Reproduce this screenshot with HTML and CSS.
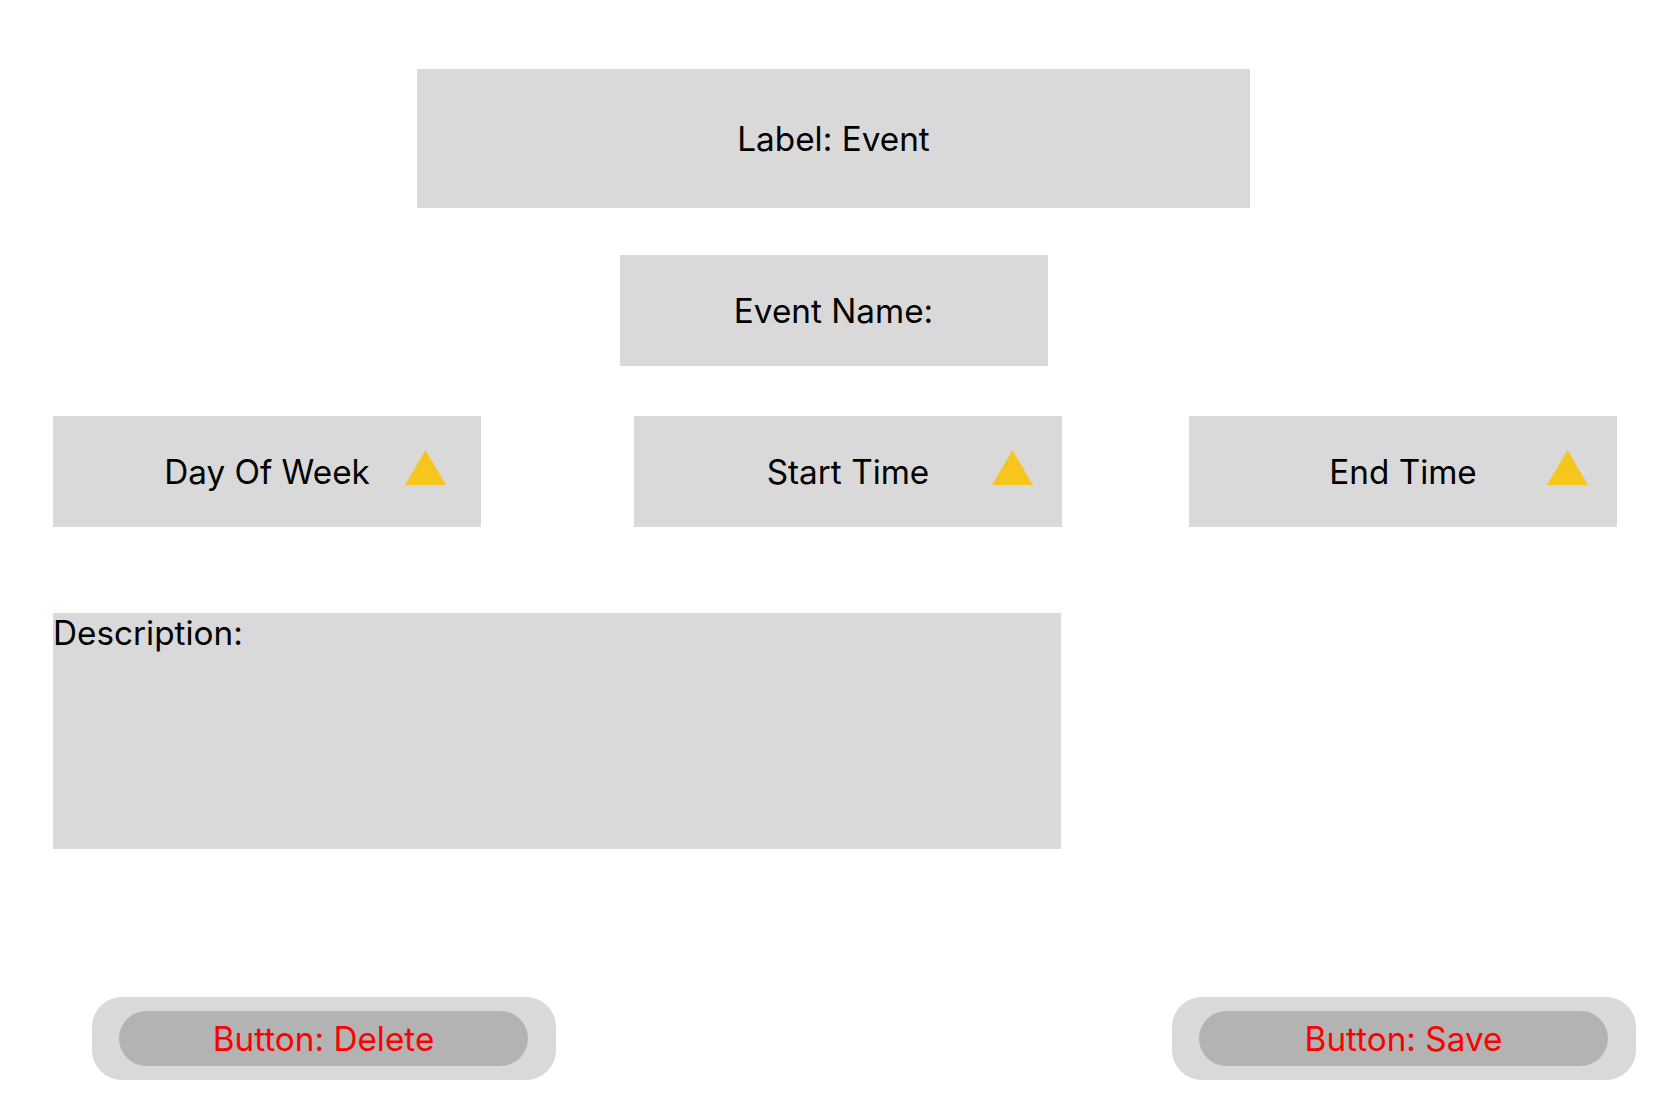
FILE: index.html
```html
<!DOCTYPE html>
<html lang="en">
<head>
<meta charset="utf-8">
<title>Event</title>
<link rel="stylesheet" href="styles.css">
</head>
<body>
<div class="page">
  <div class="title-box">Label: Event</div>
  <div class="name-box">Event Name:</div>
  <div class="picker-row">
    <div class="picker picker-day">
      <span class="picker-text">Day Of Week</span>
      <svg class="tri" width="41" height="35" viewBox="0 0 41 35"><polygon points="20.5,0 41,35 0,35" fill="#f7c61e"/></svg>
    </div>
    <div class="picker picker-start">
      <span class="picker-text">Start Time</span>
      <svg class="tri" width="41" height="35" viewBox="0 0 41 35"><polygon points="20.5,0 41,35 0,35" fill="#f7c61e"/></svg>
    </div>
    <div class="picker picker-end">
      <span class="picker-text">End Time</span>
      <svg class="tri" width="41" height="35" viewBox="0 0 41 35"><polygon points="20.5,0 41,35 0,35" fill="#f7c61e"/></svg>
    </div>
  </div>
  <div class="desc-box">Description:</div>
  <div class="button-row">
    <div class="btn-outer btn-delete"><div class="btn-inner">Button: Delete</div></div>
    <div class="btn-outer btn-save"><div class="btn-inner">Button: Save</div></div>
  </div>
</div>
</body>
</html>
```
FILE: styles.css
```css
html, body {
  margin: 0;
  padding: 0;
  background: #ffffff;
}
body {
  font-family: "Inter", "Noto Sans", sans-serif;
  font-size: 33.3px;
  color: #000000;
}
.page {
  width: 1667px;
  height: 1112px;
  display: flex;
  flex-direction: column;
  padding-top: 69px;
  box-sizing: border-box;
}
.title-box {
  align-self: center;
  width: 833px;
  height: 139px;
  background: #d9d9d9;
  display: flex;
  align-items: center;
  justify-content: center;
}
.name-box {
  align-self: center;
  margin-top: 47px;
  width: 428px;
  height: 111px;
  background: #d9d9d9;
  display: flex;
  align-items: center;
  justify-content: center;
}
.picker-row {
  display: flex;
  margin-top: 50px;
  padding-left: 53px;
}
.picker {
  position: relative;
  width: 428px;
  height: 111px;
  background: #d9d9d9;
  display: flex;
  align-items: center;
  justify-content: center;
}
.picker-start { margin-left: 153px; }
.picker-end { margin-left: 127px; }
.tri {
  position: absolute;
  top: 34px;
  right: 29px;
  display: block;
}
.picker-day .tri { right: 35px; }
.desc-box {
  margin-top: 86px;
  margin-left: 53px;
  width: 1008px;
  height: 236px;
  background: #d9d9d9;
  line-height: normal;
}
.button-row {
  display: flex;
  margin-top: 148px;
}
.btn-outer {
  width: 464px;
  height: 83px;
  box-sizing: border-box;
  padding: 14px 28px 14px 27px;
  background: #d9d9d9;
  border-radius: 30px;
}
.btn-delete { margin-left: 92px; }
.btn-save { margin-left: 616px; }
.btn-inner {
  height: 55px;
  border-radius: 28px;
  background: #b3b3b3;
  color: #ff0000;
  display: flex;
  align-items: center;
  justify-content: center;
}
```
